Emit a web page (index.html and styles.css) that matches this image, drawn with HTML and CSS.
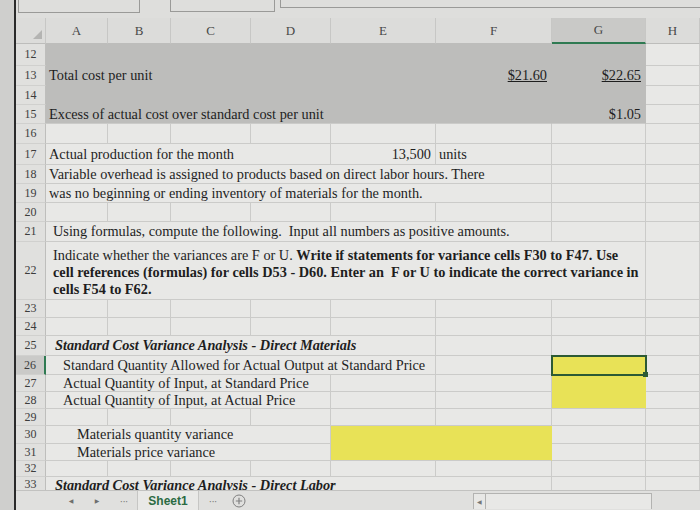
FILE: index.html
```html
<!DOCTYPE html>
<html>
<head>
<meta charset="utf-8">
<link rel="stylesheet" href="styles.css">
</head>
<body>
<div class="screen">
  <div class="bezel"></div>
  <div class="main">
    <div class="topstrip">
      <div class="tool t1"></div>
      <div class="tool t2"></div>
      <div class="tool t3"></div>
    </div>

    <div class="sheet">
      <div class="row colhead">
        <div class="ch corner"><span class="tri"></span></div>
        <div class="ch">A</div><div class="ch">B</div><div class="ch">C</div><div class="ch">D</div>
        <div class="ch">E</div><div class="ch">F</div><div class="ch sel">G</div><div class="ch">H</div>
      </div>

      <div class="row h22"><div class="rh">12</div><div class="c gray s7"></div><div class="c"></div></div>
      <div class="row h20"><div class="rh">13</div><div class="c gray s5">Total cost per unit</div><div class="c gray r"><u>$21.60</u></div><div class="c gray r"><u>$22.65</u></div><div class="c"></div></div>
      <div class="row h19"><div class="rh">14</div><div class="c gray s7"></div><div class="c"></div></div>
      <div class="row h19"><div class="rh">15</div><div class="c gray gl s6">Excess of actual cost over standard cost per unit</div><div class="c gray gl r">$1.05</div><div class="c"></div></div>
      <div class="row h20"><div class="rh">16</div><div class="c"></div><div class="c"></div><div class="c"></div><div class="c"></div><div class="c"></div><div class="c"></div><div class="c"></div><div class="c"></div></div>
      <div class="row h21"><div class="rh">17</div><div class="c s4">Actual production for the month</div><div class="c r">13,500</div><div class="c">units</div><div class="c"></div><div class="c"></div></div>
      <div class="row h19"><div class="rh">18</div><div class="c s6">Variable overhead is assigned to products based on direct labor hours. There</div><div class="c"></div><div class="c"></div></div>
      <div class="row h19"><div class="rh">19</div><div class="c s6">was no beginning or ending inventory of materials for the month.</div><div class="c"></div><div class="c"></div></div>
      <div class="row h19"><div class="rh">20</div><div class="c"></div><div class="c"></div><div class="c"></div><div class="c"></div><div class="c"></div><div class="c"></div><div class="c"></div><div class="c"></div></div>
      <div class="row h20"><div class="rh">21</div><div class="c s6 ind0">Using formulas, compute the following.&nbsp; Input all numbers as positive amounts.</div><div class="c"></div><div class="c"></div></div>
      <div class="row h58"><div class="rh">22</div><div class="c s7 wrap"><div class="wtext">Indicate whether the variances are F or U. <b>Write if statements for variance cells F30 to F47. Use<br>cell references (formulas) for cells D53 - D60. Enter an&nbsp; F or U to indicate the correct variance in<br>cells F54 to F62.</b></div></div><div class="c"></div></div>
      <div class="row h18"><div class="rh">23</div><div class="c"></div><div class="c"></div><div class="c"></div><div class="c"></div><div class="c"></div><div class="c"></div><div class="c"></div><div class="c"></div></div>
      <div class="row h18"><div class="rh">24</div><div class="c"></div><div class="c"></div><div class="c"></div><div class="c"></div><div class="c"></div><div class="c"></div><div class="c"></div><div class="c"></div></div>
      <div class="row h20"><div class="rh">25</div><div class="c s5 bi">Standard Cost Variance Analysis - Direct Materials</div><div class="c"></div><div class="c"></div><div class="c"></div></div>
      <div class="row h19"><div class="rh rsel">26</div><div class="c s5 ind1">Standard Quantity Allowed for Actual Output at Standard Price</div><div class="c"></div><div class="c yellow cursor"></div><div class="c"></div></div>
      <div class="row h17"><div class="rh">27</div><div class="c s4 ind1">Actual Quantity of Input, at Standard Price</div><div class="c"></div><div class="c"></div><div class="c yellow ycont"></div><div class="c"></div></div>
      <div class="row h17"><div class="rh">28</div><div class="c s4 ind1">Actual Quantity of Input, at Actual Price</div><div class="c"></div><div class="c"></div><div class="c yellow"></div><div class="c"></div></div>
      <div class="row h17"><div class="rh">29</div><div class="c"></div><div class="c"></div><div class="c"></div><div class="c"></div><div class="c"></div><div class="c"></div><div class="c"></div><div class="c"></div></div>
      <div class="row h18"><div class="rh">30</div><div class="c s4 ind2">Materials quantity variance</div><div class="c yellow ycont s2"></div><div class="c"></div><div class="c"></div></div>
      <div class="row h17"><div class="rh">31</div><div class="c s4 ind2">Materials price variance</div><div class="c yellow s2"></div><div class="c"></div><div class="c"></div></div>
      <div class="row h16"><div class="rh">32</div><div class="c"></div><div class="c"></div><div class="c"></div><div class="c"></div><div class="c"></div><div class="c"></div><div class="c"></div><div class="c"></div></div>
      <div class="row h13 clip"><div class="rh top">33</div><div class="c s6 bi top">Standard Cost Variance Analysis - Direct Labor</div><div class="c"></div><div class="c"></div></div>
    </div>

    <div class="tabbar">
      <span class="nav">&#9664;</span>
      <span class="nav">&#9654;</span>
      <span class="dots">&middot;&middot;&middot;</span>
      <span class="tab">Sheet1</span>
      <span class="dots">&middot;&middot;&middot;</span>
      <span class="add"><svg width="14" height="14" viewBox="0 0 14 14"><circle cx="7" cy="7" r="6" fill="none" stroke="#808080" stroke-width="1"/><path d="M7 3.8v6.4M3.8 7h6.4" stroke="#808080" stroke-width="1.2"/></svg></span>
      <span class="scroll"><span class="sarrow">&#9664;</span></span>
    </div>
  </div>
</div>
</body>
</html>
```

FILE: styles.css
```css
:root {
  --cols: 30px 62px 63px 80px 80px 105px 116px 94px 54px;
  --cell: #e8e8e6;
  --grid: #cbcbc9;
  --head: #dcdcda;
  --band: #bdbdbb;
  --yellow: #e8e257;
  --green: #2f7a52;
}

html, body {
  margin: 0;
  padding: 0;
}

body {
  width: 700px;
  height: 510px;
  overflow: hidden;
  background: #d6d6d4;
  font-family: "Liberation Serif", "Times New Roman", serif;
  color: #1e1e1e;
}

.screen {
  display: flex;
  height: 510px;
}

.bezel {
  width: 14px;
  background: #cfcfcd;
  border-right: 2px solid #2a2a2a;
  flex: none;
}

.main {
  flex: 1;
  display: flex;
  flex-direction: column;
  min-width: 0;
}

.topstrip {
  height: 18px;
  background: #dededc;
  display: flex;
  align-items: flex-start;
  padding-left: 2px;
  box-sizing: border-box;
}

.tool {
  border: 1px solid #9a9a98;
  border-top: none;
  box-sizing: border-box;
}

.t1 { width: 122px; height: 13px; }
.t2 { width: 105px; height: 12px; margin-left: 30px; }
.t3 { flex: 1; height: 8px; margin-left: 5px; border-right: none; }

.sheet {
  background: var(--cell);
}

.row {
  display: grid;
  grid-template-columns: var(--cols);
}

.colhead { height: 26px; }

.ch {
  background: var(--head);
  border-right: 1px solid #c7c7c5;
  border-bottom: 1px solid #bdbdbb;
  display: flex;
  align-items: center;
  justify-content: center;
  font-size: 13px;
  color: #484848;
}

.ch.sel {
  background: #c9c9c7;
  border-bottom: 2px solid var(--green);
}

.corner {
  justify-content: flex-end;
  align-items: flex-end;
  padding: 0 3px 4px 0;
  box-sizing: border-box;
}

.tri {
  width: 0;
  height: 0;
  border-left: 9px solid transparent;
  border-bottom: 9px solid #b4b4b2;
}

.h13 { height: 13px; }
.h16 { height: 16px; }
.h17 { height: 17px; }
.h18 { height: 18px; }
.h19 { height: 19px; }
.h20 { height: 20px; }
.h21 { height: 21px; }
.h22 { height: 22px; }
.h58 { height: 58px; }

.clip { overflow: hidden; }

.rh {
  background: #e0e0de;
  border-right: 1px solid #bebebc;
  border-bottom: 1px solid #d0d0ce;
  display: flex;
  align-items: center;
  justify-content: center;
  font-size: 12px;
  color: #3c3c3c;
}

.rh.rsel {
  background: #cacac8;
  border-right: 2px solid var(--green);
}

.c {
  border-right: 1px solid var(--grid);
  border-bottom: 1px solid var(--grid);
  display: flex;
  align-items: center;
  padding: 0 3px;
  white-space: nowrap;
  overflow: hidden;
  font-size: 14.3px;
  min-width: 0;
}

.top { align-items: flex-start; padding-top: 0; }

.r { justify-content: flex-end; padding-right: 4px; }

.s2 { grid-column: span 2; }
.s4 { grid-column: span 4; }
.s5 { grid-column: span 5; }
.s6 { grid-column: span 6; }
.s7 { grid-column: span 7; }

.gray {
  background: var(--band);
  border-right-color: var(--band);
  border-bottom-color: var(--band);
}

.gray.gl { border-bottom-color: var(--grid); }

.wrap {
  align-items: flex-end;
  padding-bottom: 1px;
  padding-left: 7px;
}

.wtext {
  white-space: nowrap;
  line-height: 17px;
}

.bi {
  font-weight: bold;
  font-style: italic;
  padding-left: 9px;
}

.ind0 { padding-left: 7px; }
.ind1 { padding-left: 17px; }
.ind2 { padding-left: 31px; }

.yellow {
  background: var(--yellow);
  border-right-color: var(--yellow);
}

.ycont { border-bottom-color: var(--yellow); }

.cursor {
  position: relative;
  outline: 2px solid #2c5a34;
  outline-offset: -1px;
  border-bottom-color: var(--yellow);
  overflow: visible;
}

.cursor::after {
  content: "";
  position: absolute;
  right: -3px;
  bottom: -3px;
  width: 5px;
  height: 5px;
  background: #2c5a34;
}

.tabbar {
  height: 20px;
  background: #e0e0de;
  border-top: 1px solid #c2c2c0;
  box-sizing: border-box;
  display: flex;
  align-items: center;
  padding-left: 42px;
  font-family: "Liberation Sans", Arial, sans-serif;
}

.nav {
  width: 26px;
  text-align: center;
  font-family: "DejaVu Sans", sans-serif;
  font-size: 6px;
  color: #6e6e6e;
}

.dots {
  width: 27px;
  text-align: center;
  font-size: 11px;
  color: #808080;
  letter-spacing: -1px;
}

.tab {
  width: 62px;
  height: 19px;
  box-sizing: border-box;
  background: #e9e9e7;
  border-left: 1px solid #c6c6c4;
  border-right: 1px solid #c6c6c4;
  display: flex;
  align-items: center;
  justify-content: center;
  font-size: 12px;
  font-weight: bold;
  color: #2c6b43;
}

.add {
  width: 26px;
  display: flex;
  justify-content: center;
}

.scroll {
  margin-left: 221px;
  width: 179px;
  height: 16px;
  box-sizing: border-box;
  border: 1px solid #b3b3b1;
  border-bottom: none;
  background: #e8e8e6;
  display: flex;
  align-items: center;
  padding-left: 3px;
}

.sarrow {
  font-family: "DejaVu Sans", sans-serif;
  font-size: 6px;
  color: #777;
  border-right: 1px solid #b3b3b1;
  padding-right: 3px;
  height: 15px;
  display: flex;
  align-items: center;
}
```
